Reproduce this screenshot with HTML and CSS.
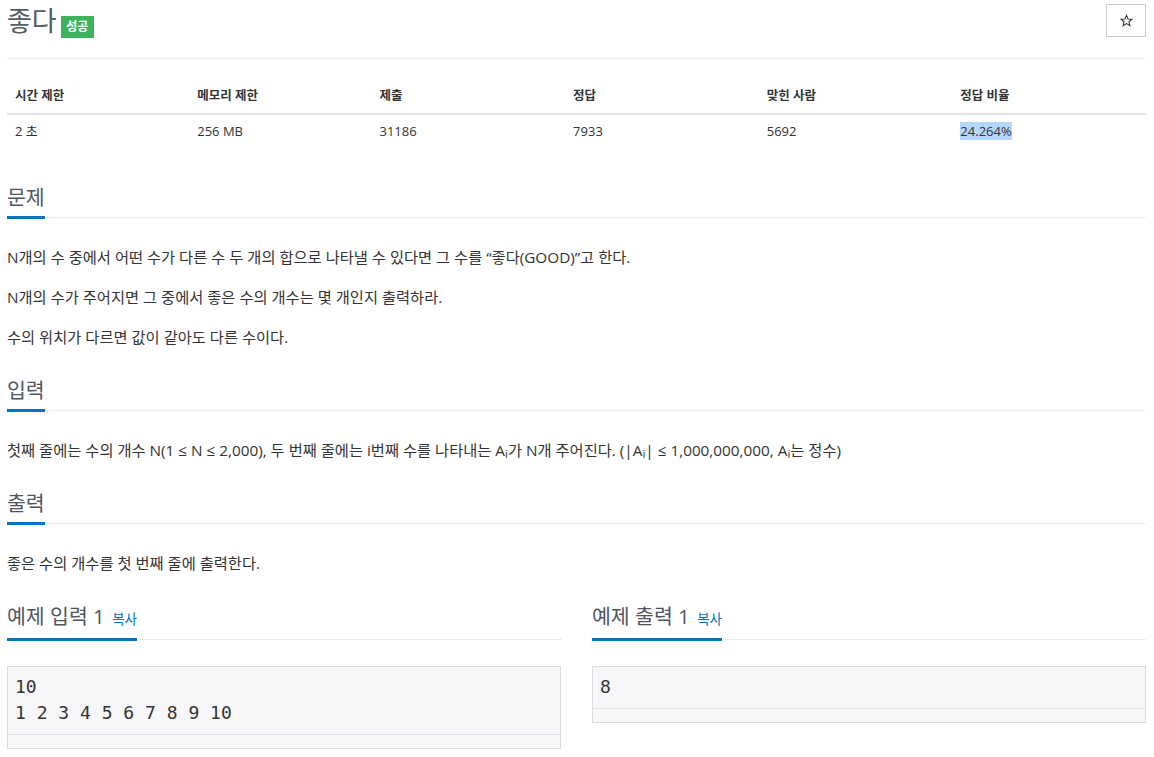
FILE: index.html
```html
<!DOCTYPE html>
<html lang="ko">
<head>
<meta charset="utf-8">
<title>좋다</title>
<link rel="stylesheet" href="styles.css">
</head>
<body>
<div class="page">
  <div class="page-header">
    <h1 class="title"><span class="title-text">좋다</span><span class="badge">성공</span></h1>
    <button class="star-btn" type="button" aria-label="즐겨찾기">
      <svg width="13" height="13" viewBox="0 0 24 24"><path d="M12 2.5l2.9 6.6 7.1.6-5.4 4.7 1.6 7-6.2-3.7-6.2 3.7 1.6-7L2 9.7l7.1-.6z" fill="none" stroke="#333" stroke-width="2" stroke-linejoin="miter"/></svg>
    </button>
  </div>
  <hr class="divider">

  <table class="info">
    <thead>
      <tr>
        <th class="c16">시간 제한</th>
        <th class="c16">메모리 제한</th>
        <th class="c17">제출</th>
        <th class="c17">정답</th>
        <th class="c17">맞힌 사람</th>
        <th class="c17">정답 비율</th>
      </tr>
    </thead>
    <tbody>
      <tr>
        <td>2 초</td>
        <td>256 MB</td>
        <td>31186</td>
        <td>7933</td>
        <td>5692</td>
        <td><span class="selected">24.264%</span></td>
      </tr>
    </tbody>
  </table>

  <section class="section">
    <div class="headline"><h2><span class="hl">문제</span></h2></div>
    <div class="text">
      <p>N개의 수 중에서 어떤 수가 다른 수 두 개의 합으로 나타낼 수 있다면 그 수를 “좋다(GOOD)”고 한다.</p>
      <p>N개의 수가 주어지면 그 중에서 좋은 수의 개수는 몇 개인지 출력하라.</p>
      <p>수의 위치가 다르면 값이 같아도 다른 수이다.</p>
    </div>
  </section>

  <section class="section">
    <div class="headline"><h2><span class="hl">입력</span></h2></div>
    <div class="text">
      <p>첫째 줄에는 수의 개수 N(1 ≤ N ≤ 2,000), 두 번째 줄에는 i번째 수를 나타내는 A<sub>i</sub>가 N개 주어진다. (|A<sub>i</sub>| ≤ 1,000,000,000, A<sub>i</sub>는 정수)</p>
    </div>
  </section>

  <section class="section">
    <div class="headline"><h2><span class="hl">출력</span></h2></div>
    <div class="text">
      <p>좋은 수의 개수를 첫 번째 줄에 출력한다.</p>
    </div>
  </section>

  <div class="samples">
    <section class="sample">
      <div class="headline sample-headline"><h2><span class="hl">예제 입력 1 <a class="copy" href="#">복사</a></span></h2></div>
      <div class="sample-box"><pre class="sample-data">10
1 2 3 4 5 6 7 8 9 10</pre><div class="scroll-strip"></div></div>
    </section>
    <section class="sample">
      <div class="headline sample-headline"><h2><span class="hl">예제 출력 1 <a class="copy" href="#">복사</a></span></h2></div>
      <div class="sample-box"><pre class="sample-data">8</pre><div class="scroll-strip"></div></div>
    </section>
  </div>
</div>
</body>
</html>
```
FILE: styles.css
```css
* {
  box-sizing: border-box;
}

html, body {
  margin: 0;
  padding: 0;
  background: #fff;
}

body {
  font-family: "Open Sans", "Noto Sans CJK KR", sans-serif;
  color: #333;
  font-size: 15.3px;
}

.page {
  padding: 0 8px 0 7px;
}

.page-header {
  display: flex;
  justify-content: space-between;
  align-items: flex-start;
  padding-top: 4px;
}

.title {
  margin: 0;
  display: flex;
  align-items: flex-start;
  font-weight: 400;
}

.title-text {
  font-size: 27px;
  line-height: 34px;
  color: #555c65;
}

.badge {
  margin: 12px 0 0 4px;
  display: inline-block;
  width: 33px;
  height: 22px;
  line-height: 22px;
  text-align: center;
  background: #3cb35c;
  color: #fff;
  font-size: 12px;
  font-weight: 700;
}

.star-btn {
  width: 40px;
  height: 33px;
  padding: 0;
  border: 1px solid #ccc;
  background: #fff;
  display: flex;
  align-items: center;
  justify-content: center;
}

.star-btn svg {
  display: block;
}

.divider {
  border: 0;
  border-top: 1px solid #eee;
  margin: 20px 0 0;
}

.info {
  width: 100%;
  border-collapse: collapse;
  margin-top: 21px;
  margin-bottom: 36px;
}

.info th,
.info td {
  text-align: left;
  padding: 6px 8px 7px;
  line-height: 20px;
}

.info th {
  font-size: 12.5px;
  font-weight: 700;
  border-bottom: 2px solid #e3e3e3;
}

.info td {
  font-size: 13px;
}

.c16 { width: 16%; }
.c17 { width: 17%; }

.selected {
  background: #b3d7fd;
}

.section {
  margin-bottom: 28px;
}

.headline {
  display: flex;
  border-bottom: 1px dotted #d6dbe0;
  margin-bottom: 27px;
}

.headline h2 {
  margin: 0;
  font-size: 20.5px;
  font-weight: 400;
  line-height: 26px;
  color: #4f5660;
}

.hl {
  display: inline-block;
  padding-bottom: 6px;
  border-bottom: 3px solid #0076c0;
  margin-bottom: -2px;
}

.text p {
  margin: 0 0 16px;
  line-height: 24px;
}

.text sub {
  font-size: 75%;
  vertical-align: -0.2em;
  line-height: 0;
}

.samples {
  display: grid;
  grid-template-columns: 1fr 1fr;
  column-gap: 31px;
}

.sample-headline {
  margin-bottom: 26px;
}

.copy {
  font-size: 13.5px;
  color: #0076c0;
  text-decoration: none;
  margin-left: 2px;
}

.sample-box {
  border: 1px solid #dcdce0;
  background: #f7f7f9;
}

.sample-data {
  margin: 0;
  padding: 7px 7px 8px;
  font-family: "DejaVu Sans Mono", monospace;
  font-size: 18px;
  line-height: 26px;
  color: #333;
  border-bottom: 1px solid #e1e1e8;
}

.scroll-strip {
  height: 13px;
  background: #f8f8f9;
}
```
